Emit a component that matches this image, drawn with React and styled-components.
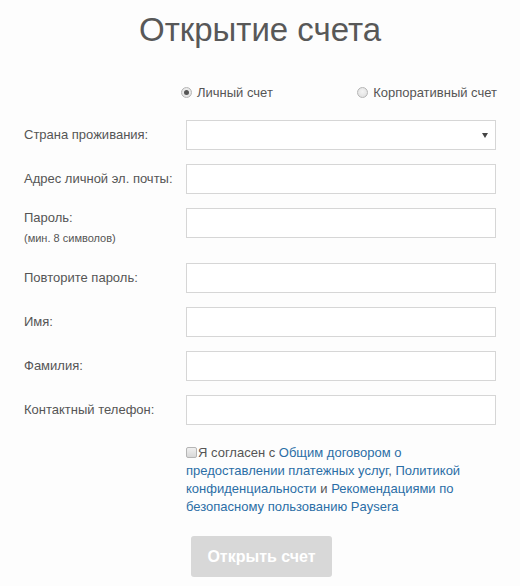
import React, { useState } from "react";
import styled, { createGlobalStyle } from "styled-components";

const GlobalStyle = createGlobalStyle`
  html, body {
    margin: 0;
    padding: 0;
    background: #fdfdfd;
  }
  body {
    font-family: "Liberation Sans", Arial, sans-serif;
    color: #555;
  }
`;

const fields = [
  { id: "email", label: "Адрес личной эл. почты:" },
  { id: "password", label: "Пароль:", hint: "(мин. 8 символов)", type: "password" },
  { id: "repeat", label: "Повторите пароль:", type: "password" },
  { id: "name", label: "Имя:" },
  { id: "surname", label: "Фамилия:" },
  { id: "phone", label: "Контактный телефон:" },
];

const App = () => {
  const [accountType, setAccountType] = useState("personal");
  const [agreed, setAgreed] = useState(false);

  return (
    <>
      <GlobalStyle />
      <Page>
        <Title>Открытие счета</Title>

        <TypeRow>
          <Spacer />
          <TypeOptions>
            <RadioLabel>
              <Radio
                type="radio"
                name="type"
                checked={accountType === "personal"}
                onChange={() => setAccountType("personal")}
              />
              Личный счет
            </RadioLabel>
            <RadioLabel>
              <Radio
                type="radio"
                name="type"
                checked={accountType === "corporate"}
                onChange={() => setAccountType("corporate")}
              />
              Корпоративный счет
            </RadioLabel>
          </TypeOptions>
        </TypeRow>

        <Form onSubmit={(e) => e.preventDefault()}>
          <Row>
            <Label htmlFor="country">Страна проживания:</Label>
            <SelectBox id="country">
              <Arrow />
            </SelectBox>
          </Row>

          {fields.map((f) => (
            <Row key={f.id} $tall={!!f.hint}>
              {f.hint ? (
                <LabelBlock>
                  <Label htmlFor={f.id}>{f.label}</Label>
                  <Hint>{f.hint}</Hint>
                </LabelBlock>
              ) : (
                <Label htmlFor={f.id}>{f.label}</Label>
              )}
              <Input id={f.id} type={f.type || "text"} />
            </Row>
          ))}

          <Row>
            <Spacer />
            <Agreement>
              <Check
                type="checkbox"
                checked={agreed}
                onChange={(e) => setAgreed(e.target.checked)}
              />
              Я согласен с <Link href="#">Общим договором о предоставлении платежных услуг</Link>,{" "}
              <Link href="#">Политикой конфиденциальности</Link> и{" "}
              <Link href="#">Рекомендациями по безопасному пользованию Paysera</Link>
            </Agreement>
          </Row>

          <Row>
            <Spacer />
            <Submit disabled={!agreed}>Открыть счет</Submit>
          </Row>
        </Form>
      </Page>
    </>
  );
};

const Page = styled.div`
  width: 520px;
  padding: 9px 24px 0 24px;
  box-sizing: border-box;
`;

const Title = styled.h1`
  margin: 0;
  text-align: center;
  font-size: 33px;
  font-weight: 400;
  line-height: 42px;
  color: #585858;
`;

const Spacer = styled.div``;

const TypeRow = styled.div`
  display: grid;
  grid-template-columns: 157px 316px;
  margin-top: 32px;
  height: 18px;
  align-items: center;
`;

const TypeOptions = styled.div`
  display: flex;
  justify-content: space-between;
  align-items: center;
`;

const RadioLabel = styled.label`
  display: flex;
  align-items: center;
  font-size: 13px;
  color: #555;
`;

const Radio = styled.input`
  appearance: none;
  box-sizing: border-box;
  width: 11px;
  height: 11px;
  margin: 0 5px 0 0;
  border-radius: 50%;
  border: 1px solid #b5b5b5;
  background: radial-gradient(circle at 50% 40%, #f4f4f4, #dcdcdc);
  position: relative;

  &:checked::after {
    content: "";
    position: absolute;
    left: 2px;
    top: 2px;
    width: 5px;
    height: 5px;
    border-radius: 50%;
    background: #555;
  }
`;

const Form = styled.form`
  margin-top: 19px;
  display: flex;
  flex-direction: column;
  gap: 14px;
`;

const Row = styled.div`
  display: grid;
  grid-template-columns: 162px 310px;
  align-items: ${(p) => (p.$tall ? "start" : "center")};
  min-height: ${(p) => (p.$tall ? "41px" : "auto")};
`;

const Label = styled.label`
  font-size: 13px;
  line-height: 16px;
  color: #555;
`;

const LabelBlock = styled.div`
  display: flex;
  flex-direction: column;
  padding-top: 2px;
`;

const Hint = styled.span`
  font-size: 11px;
  line-height: 14px;
  margin-top: 5px;
  color: #555;
`;

const Input = styled.input`
  box-sizing: border-box;
  width: 310px;
  height: 30px;
  border: 1px solid #d6d6d6;
  background: #fff;
  padding: 4px 8px;
  font-size: 13px;
  outline: none;
`;

const SelectBox = styled.div`
  box-sizing: border-box;
  width: 310px;
  height: 30px;
  border: 1px solid #d6d6d6;
  background: #fff;
  display: flex;
  align-items: center;
  justify-content: flex-end;
  padding-right: 7px;
`;

const Arrow = styled.span`
  width: 0;
  height: 0;
  border-left: 3px solid transparent;
  border-right: 3px solid transparent;
  border-top: 5px solid #444;
`;

const Agreement = styled.div`
  width: 300px;
  font-size: 13px;
  line-height: 18px;
  color: #555;
  margin-top: 5px;
`;

const Check = styled.input`
  appearance: none;
  box-sizing: border-box;
  width: 11px;
  height: 11px;
  margin: 0 1px 0 0;
  vertical-align: -1px;
  border: 1px solid #b5b5b5;
  border-radius: 2px;
  background: linear-gradient(#f0f0f0, #d8d8d8);

  &:checked {
    background: #555;
  }
`;

const Link = styled.a`
  color: #2b6ea6;
  text-decoration: none;
`;

const Submit = styled.button`
  margin: 6px 0 0 5px;
  width: 141px;
  height: 41px;
  border: none;
  border-radius: 3px;
  background: #d8d8d8;
  color: #fff;
  font-family: "Liberation Sans", Arial, sans-serif;
  font-size: 16px;
  font-weight: 700;
  cursor: pointer;

  &:disabled {
    cursor: default;
  }
`;

export default App;
